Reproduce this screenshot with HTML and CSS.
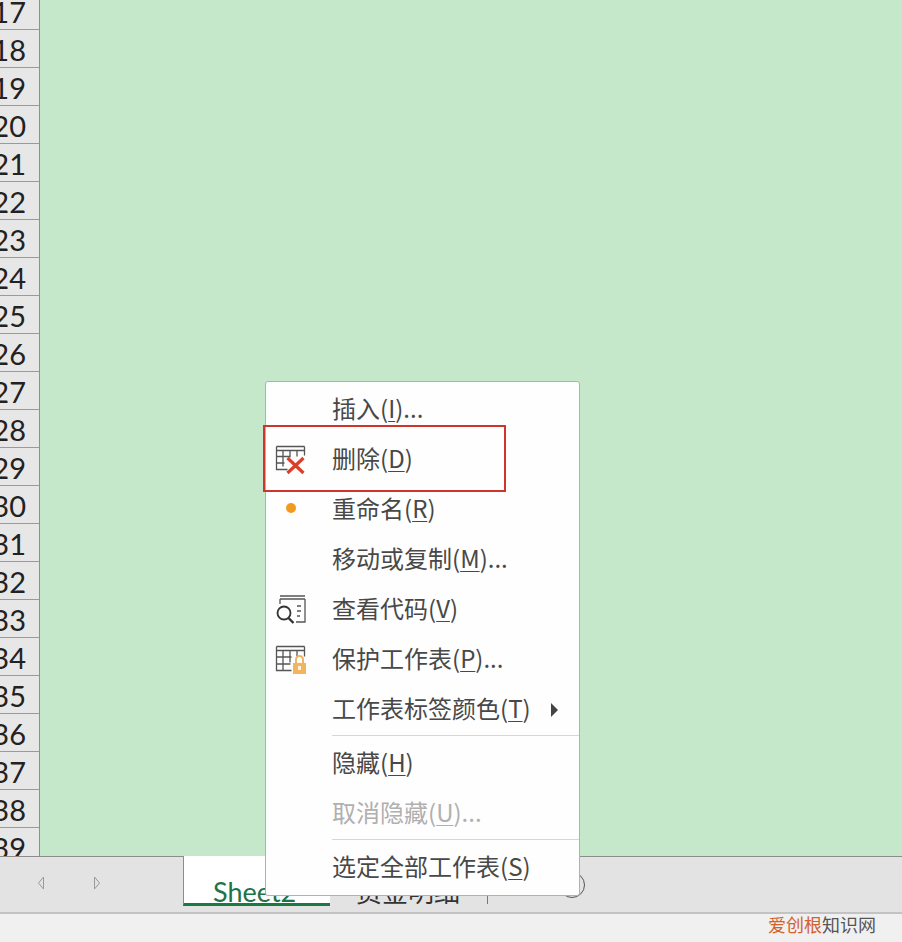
FILE: index.html

```html
<!DOCTYPE html>
<html lang="zh-CN">
<head>
    <meta charset="UTF-8">
    <meta name="viewport" content="width=device-width, initial-scale=1.0">
    <title>Sheet2</title>
    <link rel="stylesheet" href="styles.css">
</head>
<body>
    <div class="sheet">
        <div class="row-header">
            <div class="row-num">17</div>
            <div class="row-num">18</div>
            <div class="row-num">19</div>
            <div class="row-num">20</div>
            <div class="row-num">21</div>
            <div class="row-num">22</div>
            <div class="row-num">23</div>
            <div class="row-num">24</div>
            <div class="row-num">25</div>
            <div class="row-num">26</div>
            <div class="row-num">27</div>
            <div class="row-num">28</div>
            <div class="row-num">29</div>
            <div class="row-num">30</div>
            <div class="row-num">31</div>
            <div class="row-num">32</div>
            <div class="row-num">33</div>
            <div class="row-num">34</div>
            <div class="row-num">35</div>
            <div class="row-num">36</div>
            <div class="row-num">37</div>
            <div class="row-num">38</div>
            <div class="row-num">39</div>
        </div>
        <div class="cells"></div>
    </div>

    <div class="tabbar">
        <div class="tab-nav">
            <svg class="nav-arrow" width="8" height="14" viewBox="0 0 8 14"><path d="M6.5 1 1.5 7l5 6V1z" fill="none" stroke="#9a9a9a"/></svg>
            <svg class="nav-arrow" width="8" height="14" viewBox="0 0 8 14"><path d="M1.5 1l5 6-5 6V1z" fill="none" stroke="#9a9a9a"/></svg>
        </div>
        <div class="tab tab-active">Sheet2</div>
        <div class="tab tab-plain">资金明细</div>
        <div class="tab-sep"></div>
        <div class="tab-add"></div>
    </div>

    <div class="statusbar">
        <span class="mark"><span class="mark-orange">爱创根</span>知识网</span>
    </div>

    <div class="menu">
        <div class="item"><span class="slot"></span><span class="label">插入(<u>I</u>)...</span></div>
        <div class="item">
            <span class="slot">
                <svg width="32" height="32" viewBox="0 0 32 32" fill="none">
                    <path d="M1.5 2.5h28M1.5 6.5h28M1.5 2.5v23h11M1.5 12.5h13M1.5 19h8M1.5 25.5h11M8 6.5v16M15 6.5v7M22 6.5v6M29.5 2.5v9" stroke="#555" stroke-width="1.3"/>
                    <path d="M12.5 14l16 15M28.5 14l-16 15" stroke="#d8402c" stroke-width="3.2"/>
                </svg>
            </span>
            <span class="label">删除(<u>D</u>)</span>
        </div>
        <div class="item"><span class="slot"><span class="dot"></span></span><span class="label">重命名(<u>R</u>)</span></div>
        <div class="item"><span class="slot"></span><span class="label">移动或复制(<u>M</u>)...</span></div>
        <div class="item">
            <span class="slot">
                <svg width="32" height="32" viewBox="0 0 32 32" fill="none">
                    <path d="M5 2h25M5 5h25" stroke="#555" stroke-width="1.6"/>
                    <path d="M30 5v23H21M5 5v5M22 12h4M22 17h4M22 22h3" stroke="#555" stroke-width="1.3"/>
                    <circle cx="9" cy="19" r="6.5" stroke="#333" stroke-width="1.8"/>
                    <path d="M13.5 24l5 5" stroke="#333" stroke-width="2.4"/>
                </svg>
            </span>
            <span class="label">查看代码(<u>V</u>)</span>
        </div>
        <div class="item">
            <span class="slot">
                <svg width="32" height="32" viewBox="0 0 32 32" fill="none">
                    <path d="M1.5 2.5h28M1.5 6.5h28M1.5 2.5v24h15M1.5 13h15M1.5 20h14M8 6.5v20M15 6.5v12M22 6.5v6M29.5 2.5v10" stroke="#555" stroke-width="1.3"/>
                    <path d="M21 19v-3.5a3.5 3.5 0 0 1 7 0V19" stroke="#eeb564" stroke-width="2"/>
                    <rect x="18" y="19" width="13" height="11" fill="#f2b45c"/>
                    <rect x="23" y="22" width="3" height="4" fill="#fff2dc"/>
                </svg>
            </span>
            <span class="label">保护工作表(<u>P</u>)...</span>
        </div>
        <div class="item">
            <span class="slot"></span>
            <span class="label">工作表标签颜色(<u>T</u>)</span>
            <span class="submenu-arrow"></span>
        </div>
        <div class="sep sep-first"></div>
        <div class="item"><span class="slot"></span><span class="label">隐藏(<u>H</u>)</span></div>
        <div class="item item-disabled"><span class="slot"></span><span class="label">取消隐藏(<u>U</u>)...</span></div>
        <div class="sep"></div>
        <div class="item"><span class="slot"></span><span class="label">选定全部工作表(<u>S</u>)</span></div>
    </div>

    <div class="highlight"></div>
</body>
</html>
```

FILE: styles.css

```css
html, body {
    margin: 0;
    padding: 0;
    height: 942px;
    overflow: hidden;
}
body {
    position: relative;
    display: flex;
    flex-direction: column;
    background-color: #f1f0f1;
    font-family: "Noto Sans CJK SC", sans-serif;
    color: #444;
}

/* grid */
.sheet {
    display: flex;
    height: 856px;
    flex: none;
    overflow: hidden;
}
.row-header {
    width: 39px;
    flex: none;
    margin-top: -8px;
    background-color: #e8e7e8;
    border-right: 1px solid #8f8f8f;
}
.row-num {
    box-sizing: border-box;
    height: 38px;
    padding-right: 13px;
    border-bottom: 1px solid #9a9a9a;
    text-align: right;
    white-space: nowrap;
    direction: rtl;
    font-family: Lato, sans-serif;
    font-size: 29px;
    line-height: 39px;
    color: #222;
}
.cells {
    flex: 1;
    background-color: #c6e8ca;
}

/* sheet tabs */
.tabbar {
    display: flex;
    align-items: stretch;
    height: 58px;
    flex: none;
    box-sizing: border-box;
    background-color: #e4e3e4;
    border-top: 1px solid #8c8c8c;
    border-bottom: 2px solid #c4c3c4;
}
.tab-nav {
    width: 183px;
    flex: none;
    box-sizing: border-box;
    display: flex;
    align-items: center;
    gap: 48px;
    padding: 0 0 4px 37px;
}
.tab {
    font-size: 26px;
    line-height: 34px;
    white-space: nowrap;
}
.tab-active {
    width: 147px;
    box-sizing: border-box;
    margin-top: -1px;
    padding: 19px 0 0 29px;
    height: 50px;
    background-color: #fff;
    border-left: 1px solid #8c8c8c;
    border-bottom: 3px solid #1a7a42;
    font-family: Lato, sans-serif;
    font-size: 27px;
    color: #217346;
    overflow: hidden;
}
.tab-plain {
    width: 131px;
    padding: 17px 0 0 26px;
    color: #333;
}
.tab-sep {
    width: 1px;
    height: 11px;
    margin-top: 36px;
    background-color: #777;
}
.tab-add {
    width: 26px;
    height: 26px;
    margin: 15px 0 0 71px;
    box-sizing: border-box;
    border: 1.5px solid #555;
    border-radius: 50%;
}

/* bottom status bar */
.statusbar {
    flex: 1;
    display: flex;
    justify-content: flex-end;
    align-items: flex-start;
    padding-right: 26px;
}
.mark {
    font-size: 18px;
    line-height: 20px;
    color: #555;
}
.mark-orange {
    color: #d2622a;
}

/* context menu */
.menu {
    position: absolute;
    left: 265px;
    top: 381px;
    width: 315px;
    height: 515px;
    box-sizing: border-box;
    padding-top: 3px;
    background-color: #fefefe;
    border: 1px solid #a9b5ab;
    border-radius: 3px;
    font-size: 24px;
    color: #484848;
}
.item {
    display: flex;
    align-items: center;
    height: 50px;
    white-space: nowrap;
}
.label {
    margin-top: -6px;
}
.item u {
    text-underline-offset: 3px;
    text-decoration-thickness: 1px;
}
.item-disabled {
    color: #b0b0b0;
}
.slot {
    width: 66px;
    height: 32px;
    flex: none;
    box-sizing: border-box;
    padding-left: 9px;
    display: flex;
    align-items: center;
}
.dot {
    width: 10px;
    height: 10px;
    margin: -4px 0 0 11px;
    border-radius: 50%;
    background-color: #f39a1e;
}
.submenu-arrow {
    margin-left: auto;
    margin-right: 21px;
    width: 0;
    height: 0;
    border-left: 7px solid #444;
    border-top: 7px solid transparent;
    border-bottom: 7px solid transparent;
}
.sep {
    height: 1px;
    margin: 0 0 3px 66px;
    background-color: #d6d6d6;
}
.sep-first {
    margin-bottom: 3px;
}

/* red annotation box drawn over the menu */
.highlight {
    position: absolute;
    left: 263px;
    top: 425px;
    width: 243px;
    height: 67px;
    box-sizing: border-box;
    border: 2px solid #d0352c;
}
```
